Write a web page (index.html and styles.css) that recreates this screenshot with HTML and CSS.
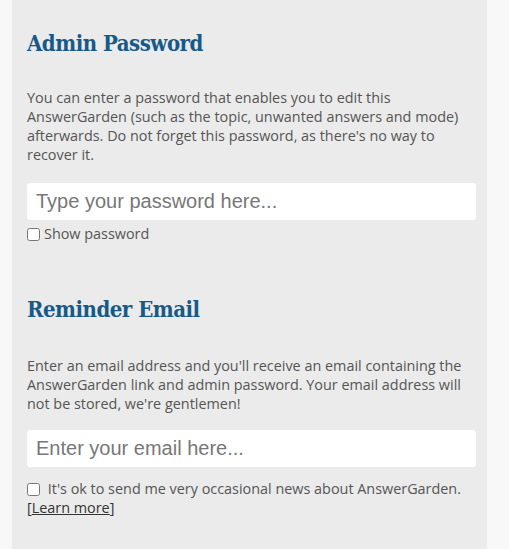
FILE: index.html
```html
<!DOCTYPE html>
<html>
<head>
<meta charset="utf-8">
<link rel="stylesheet" href="styles.css">
</head>
<body>
<div class="panel">
  <section class="block">
    <h2 class="title">Admin Password</h2>
    <p class="desc">You can enter a password that enables you to edit this AnswerGarden (such as the topic, unwanted answers and mode) afterwards. Do not forget this password, as there's no way to recover it.</p>
    <input class="field" type="password" placeholder="Type your password here...">
    <label class="check"><input type="checkbox" class="box">Show password</label>
  </section>
  <section class="block second">
    <h2 class="title">Reminder Email</h2>
    <p class="desc">Enter an email address and you'll receive an email containing the AnswerGarden link and admin password. Your email address will not be stored, we're gentlemen!</p>
    <input class="field" type="text" placeholder="Enter your email here...">
    <label class="check news"><input type="checkbox" class="box"> It's ok to send me very occasional news about AnswerGarden. <a class="more" href="#">[<u>Learn more</u>]</a></label>
  </section>
</div>
</body>
</html>
```
FILE: styles.css
```css
html, body {
  margin: 0;
  padding: 0;
  background: #f8f8f8;
  height: 100%;
}
body {
  font-family: "Open Sans", "Liberation Sans", sans-serif;
  color: #555;
}
.panel {
  margin-left: 12px;
  width: 475px;
  min-height: 549px;
  box-sizing: border-box;
  padding: 0 11px 0 15px;
  background: #ebebeb;
  display: flow-root;
}
.title {
  font-family: "DejaVu Serif", serif;
  font-stretch: condensed;
  font-weight: bold;
  font-size: 22px;
  letter-spacing: -0.5px;
  line-height: 28px;
  color: #175a87;
  margin: 29px 0 0;
}
.second .title {
  margin-top: 52px;
}
.desc {
  font-size: 14.4px;
  line-height: 19px;
  margin: 31px 0 0;
}
.second .desc {
  margin-top: 33px;
}
.field {
  display: block;
  box-sizing: border-box;
  width: 100%;
  height: 37px;
  margin-top: 19px;
  border: none;
  border-radius: 3px;
  background: #fff;
  padding: 0 9px;
  font-family: "Liberation Sans", Arial, sans-serif;
  font-size: 20px;
  color: #333;
}
.second .field {
  margin-top: 17px;
}
.field::placeholder {
  color: #777;
}
.check {
  display: block;
  font-size: 14.4px;
  line-height: 19px;
  margin-top: 4px;
}
.news {
  margin-top: 12px;
}
.box {
  width: 13px;
  height: 13px;
  margin: 0 4px 0 0;
  vertical-align: -2px;
}
.more {
  color: #333;
  text-decoration: none;
}
```
